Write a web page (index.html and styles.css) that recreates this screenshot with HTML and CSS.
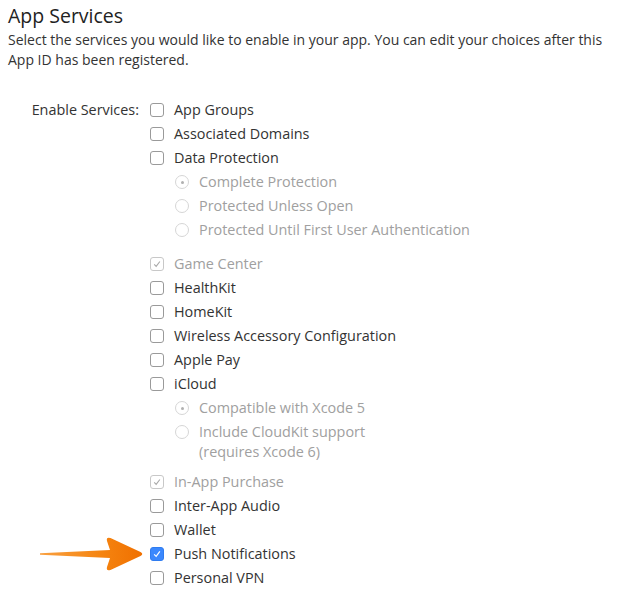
FILE: index.html
```html
<!DOCTYPE html>
<html>
<head>
<meta charset="utf-8">
<link rel="stylesheet" href="styles.css">
</head>
<body>
<div class="page">
  <h1 class="title">App Services</h1>
  <p class="desc">Select the services you would like to enable in your app. You can edit your choices after this App ID has been registered.</p>
  <div class="form">
    <div class="label">Enable Services:</div>
    <div class="options">
      <div class="row"><span class="cb"></span><span>App Groups</span></div>
      <div class="row"><span class="cb"></span><span>Associated Domains</span></div>
      <div class="row"><span class="cb"></span><span>Data Protection</span></div>
      <div class="sub">
        <div class="row dis"><span class="rb on"></span><span>Complete Protection</span></div>
        <div class="row dis"><span class="rb"></span><span>Protected Unless Open</span></div>
        <div class="row dis"><span class="rb"></span><span>Protected Until First User Authentication</span></div>
      </div>
      <div class="row dis gap"><span class="cb checked-dis"><svg viewBox="0 0 13 13"><path d="M3.5 6.8 L5.6 9 L9.6 3.8" fill="none" stroke="#a8a8a8" stroke-width="1.2"/></svg></span><span>Game Center</span></div>
      <div class="row"><span class="cb"></span><span>HealthKit</span></div>
      <div class="row"><span class="cb"></span><span>HomeKit</span></div>
      <div class="row"><span class="cb"></span><span>Wireless Accessory Configuration</span></div>
      <div class="row"><span class="cb"></span><span>Apple Pay</span></div>
      <div class="row"><span class="cb"></span><span>iCloud</span></div>
      <div class="sub">
        <div class="row dis"><span class="rb on"></span><span>Compatible with Xcode 5</span></div>
        <div class="row dis wraprow"><span class="rb"></span><span class="wrap">Include CloudKit support<br>(requires Xcode 6)</span></div>
      </div>
      <div class="row dis gap2"><span class="cb checked-dis"><svg viewBox="0 0 13 13"><path d="M3.5 6.8 L5.6 9 L9.6 3.8" fill="none" stroke="#a8a8a8" stroke-width="1.2"/></svg></span><span>In-App Purchase</span></div>
      <div class="row"><span class="cb"></span><span>Inter-App Audio</span></div>
      <div class="row"><span class="cb"></span><span>Wallet</span></div>
      <div class="row"><span class="cb checked"><svg viewBox="0 0 13 13"><path d="M3.4 6.9 L5.6 9.1 L9.6 3.7" fill="none" stroke="#fff" stroke-width="1.3"/></svg></span><span>Push Notifications</span>
        <svg class="arrow" viewBox="0 0 108 40" width="108" height="40"><defs><linearGradient id="g" x1="0" x2="1" y1="0" y2="0"><stop offset="0" stop-color="#f9a040"/><stop offset="0.6" stop-color="#f58410"/><stop offset="1" stop-color="#f07000"/></linearGradient></defs><path d="M2 19.3 L72 16 L69 7 Q68 2.5 72.5 4.1 L102.5 18 Q106 20 102.5 22 L72.5 35.9 Q68 37.5 69 33 L72 24 L2 20.7 Z" fill="url(#g)"/></svg>
      </div>
      <div class="row"><span class="cb"></span><span>Personal VPN</span></div>
    </div>
  </div>
</div>
</body>
</html>
```
FILE: styles.css
```css
html, body {
  margin: 0;
  padding: 0;
  background: #fff;
}
body {
  font-family: "Open Sans", "Noto Sans", sans-serif;
  color: #333;
  font-size: 14.4px;
}
.page {
  padding: 2px 2px 0 8px;
}
.title {
  margin: 0;
  font-size: 19.5px;
  font-weight: normal;
  line-height: 27px;
  color: #222;
}
.desc {
  margin: 1px 0 0 0;
  font-size: 14px;
  line-height: 20px;
  color: #333;
}
.form {
  display: grid;
  grid-template-columns: 131px 1fr;
  column-gap: 11px;
  margin-top: 28px;
}
.label {
  text-align: right;
  line-height: 24px;
  white-space: nowrap;
}
.row {
  display: flex;
  align-items: center;
  gap: 10px;
  line-height: 24px;
  height: 24px;
  position: relative;
  white-space: nowrap;
}
.row.gap {
  margin-top: 10px;
}
.row.gap2 {
  margin-top: 8px;
}
.sub {
  padding-left: 25px;
}
.dis {
  color: #a0a0a0;
}
.cb {
  width: 12px;
  height: 12px;
  border: 1px solid #9a9a9a;
  border-radius: 3px;
  flex: none;
  box-sizing: content-box;
  display: flex;
  background: #fff;
}
.cb svg {
  width: 12px;
  height: 12px;
}
.cb.checked-dis {
  border-color: #c8c8c8;
}
.cb.checked {
  background: #3b88fd;
  border-color: #2f7cf0;
}
.rb {
  width: 12px;
  height: 12px;
  border: 1px solid #d6d6d6;
  border-radius: 50%;
  flex: none;
  position: relative;
  box-sizing: content-box;
}
.rb.on::after {
  content: "";
  position: absolute;
  width: 3px;
  height: 3px;
  border-radius: 50%;
  background: #b0b0b0;
  left: 4.5px;
  top: 4.5px;
}
.wraprow {
  height: auto;
  align-items: flex-start;
}
.wraprow .rb {
  margin-top: 5px;
}
.wrap {
  line-height: 20px;
  padding-top: 2px;
}
.arrow {
  position: absolute;
  left: -112px;
  top: -8px;
}
```
